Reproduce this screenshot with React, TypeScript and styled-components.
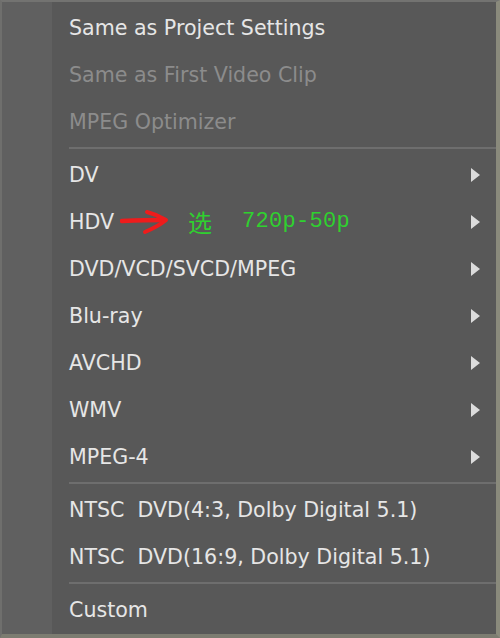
import React from "react";
import styled, { createGlobalStyle } from "styled-components";

const Global = createGlobalStyle`
  html, body { margin: 0; padding: 0; background: #585858; }
  #root { width: 500px; height: 638px; }
`;

const Menu = styled.div`
  box-sizing: border-box;
  width: 500px;
  height: 638px;
  display: grid;
  grid-template-columns: 50px 1fr;
  background: #585858;
  border-top: 2px solid #737371;
  border-left: 2px solid #6f6f6d;
  border-right: 4px solid #8a8a7c;
  border-bottom: 4px solid #7c7c71;
  font-family: "DejaVu Sans", "Liberation Sans", sans-serif;
  font-size: 20.6px;
`;

const Gutter = styled.div`
  background: #606060;
`;

const Items = styled.div`
  display: flex;
  flex-direction: column;
  padding-top: 2px;
`;

const Row = styled.div<{ $disabled?: boolean }>`
  height: 47px;
  display: flex;
  align-items: center;
  padding: 0 16px 0 17px;
  color: ${(p) => (p.$disabled ? "#8c8c8c" : "#e6e6e6")};
  white-space: pre;
`;

const Label = styled.span`
  flex: 1;
  display: flex;
  align-items: center;
`;

const Separator = styled.div`
  height: 6px;
  display: flex;
  align-items: center;
  padding-left: 17px;
  &::after {
    content: "";
    flex: 1;
    height: 2px;
    background: #6e6e6e;
  }
`;

const SubArrow = styled.span`
  width: 0;
  height: 0;
  border-top: 7px solid transparent;
  border-bottom: 7px solid transparent;
  border-left: 9px solid #dcdcdc;
`;

const Note = styled.span`
  display: inline-flex;
  align-items: center;
  margin-left: 6px;
  color: #2fd12f;
`;

const Cjk = styled.span`
  font-family: "Noto Sans CJK SC", sans-serif;
  font-size: 24px;
  margin-left: 18px;
  margin-right: 30px;
`;

const Mono = styled.span`
  font-family: "Liberation Mono", monospace;
  font-size: 22px;
  letter-spacing: 0.3px;
`;

const RedArrow = () => (
  <svg width="50" height="26" viewBox="0 0 50 26" style={{ display: "block" }}>
    <path
      d="M2 12 C14 11.5 28 11 45 11"
      stroke="#ee1c1c"
      strokeWidth="4.5"
      fill="none"
      strokeLinecap="round"
    />
    <path
      d="M27 3 C35 5 41 8 46 11 C40 16 32 20 25 23"
      stroke="#ee1c1c"
      strokeWidth="4"
      fill="none"
      strokeLinecap="round"
      strokeLinejoin="round"
    />
  </svg>
);

type Item = { label: string; disabled?: boolean; sub?: boolean; note?: boolean } | "sep";

const items: Item[] = [
  { label: "Same as Project Settings" },
  { label: "Same as First Video Clip", disabled: true },
  { label: "MPEG Optimizer", disabled: true },
  "sep",
  { label: "DV", sub: true },
  { label: "HDV", sub: true, note: true },
  { label: "DVD/VCD/SVCD/MPEG", sub: true },
  { label: "Blu-ray", sub: true },
  { label: "AVCHD", sub: true },
  { label: "WMV", sub: true },
  { label: "MPEG-4", sub: true },
  "sep",
  { label: "NTSC  DVD(4:3, Dolby Digital 5.1)" },
  { label: "NTSC  DVD(16:9, Dolby Digital 5.1)" },
  "sep",
  { label: "Custom" },
];

export default function App() {
  return (
    <>
      <Global />
      <Menu>
        <Gutter />
        <Items>
          {items.map((it, i) =>
            it === "sep" ? (
              <Separator key={i} />
            ) : (
              <Row key={i} $disabled={it.disabled}>
                <Label>
                  {it.label}
                  {it.note && (
                    <Note>
                      <RedArrow />
                      <Cjk>选</Cjk>
                      <Mono>720p-50p</Mono>
                    </Note>
                  )}
                </Label>
                {it.sub && <SubArrow />}
              </Row>
            )
          )}
        </Items>
      </Menu>
    </>
  );
}
